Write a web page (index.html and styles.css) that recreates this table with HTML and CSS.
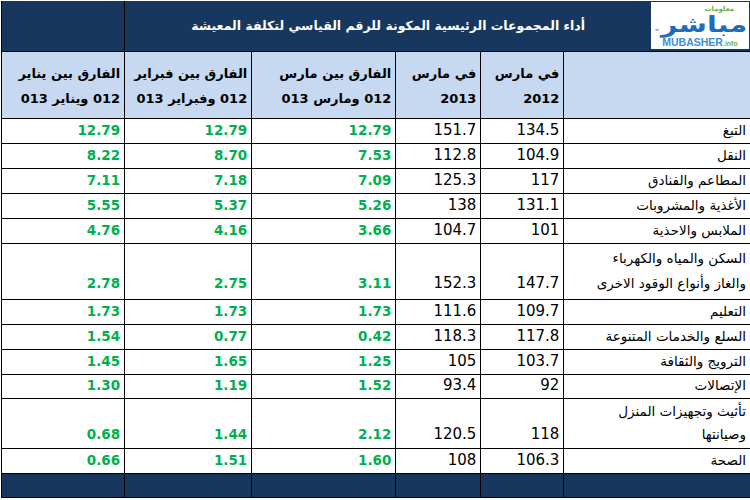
FILE: index.html
```html
<!DOCTYPE html>
<html lang="ar" dir="rtl">
<head>
<meta charset="utf-8">
<title>أداء المجموعات الرئيسية</title>
<link rel="stylesheet" href="styles.css">
</head>
<body>
<table class="sheet">
  <colgroup>
    <col class="c-label"><col class="c-y12"><col class="c-y13"><col class="c-mar"><col class="c-feb"><col class="c-jan">
  </colgroup>
  <thead>
    <tr class="row-title">
      <th colspan="5" class="title-cell">
        <div class="title-wrap">
          <div class="logo">
            <div class="logo-top">معلومات</div>
            <div class="logo-main"><span class="logo-tm">™</span><span class="logo-ar">مباشر</span></div>
            <div class="logo-bottom"><span class="logo-en">MUBASHER</span><span class="logo-info">.info</span></div>
          </div>
          <div class="title">أداء المجموعات الرئيسية المكونة للرقم القياسي لتكلفة المعيشة</div>
        </div>
      </th>
      <th class="title-side"></th>
    </tr>
    <tr class="row-head">
      <th></th>
      <th>في مارس<br>2012</th>
      <th>في مارس<br>2013</th>
      <th>الفارق بين مارس<br>012 ومارس 013</th>
      <th>الفارق بين فبراير<br>012 وفبراير 013</th>
      <th>الفارق بين يناير<br>012 ويناير 013</th>
    </tr>
  </thead>
  <tbody>
    <tr><td class="label">التبغ</td><td>134.5</td><td>151.7</td><td class="g">12.79</td><td class="g">12.79</td><td class="g">12.79</td></tr>
    <tr><td class="label">النقل</td><td>104.9</td><td>112.8</td><td class="g">7.53</td><td class="g">8.70</td><td class="g">8.22</td></tr>
    <tr><td class="label">المطاعم والفنادق</td><td>117</td><td>125.3</td><td class="g">7.09</td><td class="g">7.18</td><td class="g">7.11</td></tr>
    <tr><td class="label">الأغذية والمشروبات</td><td>131.1</td><td>138</td><td class="g">5.26</td><td class="g">5.37</td><td class="g">5.55</td></tr>
    <tr><td class="label">الملابس والاحذية</td><td>101</td><td>104.7</td><td class="g">3.66</td><td class="g">4.16</td><td class="g">4.76</td></tr>
    <tr class="row-tall"><td class="label">السكن والمياه والكهرباء<br>والغاز وأنواع الوقود الاخرى</td><td>147.7</td><td>152.3</td><td class="g">3.11</td><td class="g">2.75</td><td class="g">2.78</td></tr>
    <tr><td class="label">التعليم</td><td>109.7</td><td>111.6</td><td class="g">1.73</td><td class="g">1.73</td><td class="g">1.73</td></tr>
    <tr><td class="label">السلع والخدمات المتنوعة</td><td>117.8</td><td>118.3</td><td class="g">0.42</td><td class="g">0.77</td><td class="g">1.54</td></tr>
    <tr><td class="label">الترويج والثقافة</td><td>103.7</td><td>105</td><td class="g">1.25</td><td class="g">1.65</td><td class="g">1.45</td></tr>
    <tr class="row-24"><td class="label">الإتصالات</td><td>92</td><td>93.4</td><td class="g">1.52</td><td class="g">1.19</td><td class="g">1.30</td></tr>
    <tr class="row-50"><td class="label">تأثيث وتجهيزات المنزل<br>وصيانتها</td><td>118</td><td>120.5</td><td class="g">2.12</td><td class="g">1.44</td><td class="g">0.68</td></tr>
    <tr><td class="label">الصحة</td><td>106.3</td><td>108</td><td class="g">1.60</td><td class="g">1.51</td><td class="g">0.66</td></tr>
  </tbody>
  <tfoot>
    <tr class="row-foot"><td></td><td></td><td></td><td></td><td></td><td></td></tr>
  </tfoot>
</table>
</body>
</html>
```

FILE: styles.css
```css
html, body {
  margin: 0;
  padding: 0;
  background: #ffffff;
}
body {
  width: 750px;
  height: 500px;
  overflow: hidden;
  font-family: "DejaVu Sans", sans-serif;
}
.sheet {
  border-collapse: collapse;
  table-layout: fixed;
  width: 749px;
  margin-top: 1px;
  direction: rtl;
}
.c-label { width: 186px; }
.c-y12 { width: 83px; }
.c-y13 { width: 85px; }
.c-mar { width: 144px; }
.c-feb { width: 127px; }
.c-jan { width: 123px; }

.sheet th, .sheet td {
  box-sizing: border-box;
  border: 1px solid #000;
  padding: 0 4px 3px 4px;
  text-align: right;
  vertical-align: bottom;
  overflow: hidden;
  white-space: nowrap;
}
.sheet tr > :first-child { border-right-style: hidden; }

/* title row */
.row-title th {
  height: 50px;
  background: #17375e;
  border-top-style: hidden;
  padding: 0;
  vertical-align: middle;
}
.title-wrap {
  display: flex;
  align-items: center;
  height: 49px;
}
.logo {
  box-sizing: border-box;
  width: 98px;
  height: 47px;
  margin-right: 1px;
  padding-top: 3px;
  background: #ffffff;
  display: flex;
  flex-direction: column;
  align-items: center;
  direction: ltr;
  overflow: hidden;
}
.logo-top {
  align-self: flex-end;
  margin-right: 15px;
  font-size: 7px;
  font-weight: bold;
  line-height: 8px;
  height: 8px;
  color: #6db33f;
}
.logo-main {
  display: flex;
  align-items: flex-end;
  height: 23px;
  line-height: 23px;
}
.logo-tm {
  font-size: 5px;
  color: #1f5fa8;
  line-height: 10px;
  margin-right: 4px;
}
.logo-ar {
  display: inline-block;
  font-size: 22px;
  font-weight: bold;
  color: #1f6cb8;
  transform: scaleX(1.3);
  transform-origin: center;
  margin: 0 8px;
}
.logo-bottom {
  display: flex;
  align-items: baseline;
  height: 11px;
  line-height: 11px;
  margin-top: 1px;
}
.logo-en {
  font-family: "Liberation Sans", Arial, sans-serif;
  font-size: 10.5px;
  color: #3b8fd6;
}
.logo-info {
  font-family: "Liberation Sans", Arial, sans-serif;
  font-size: 7px;
  font-weight: bold;
  color: #6db33f;
}
.title {
  flex: 1;
  text-align: center;
  color: #ffffff;
  font-size: 12.5px;
  font-weight: bold;
}

/* header row */
.row-head th {
  height: 67px;
  background: #c6d9f1;
  font-size: 13px;
  font-weight: bold;
  line-height: 25px;
  color: #000;
  padding-bottom: 7px;
}

/* body */
.sheet tbody td {
  height: 25px;
  font-size: 15px;
  line-height: 20px;
  color: #000;
}
.sheet tbody td.label {
  font-size: 13.5px;
}
.sheet tbody td.g {
  color: #00b050;
  font-weight: bold;
  font-size: 13.5px;
}
.sheet tbody tr.row-tall td { height: 56px; line-height: 25px; }
.sheet tbody tr.row-24 td { height: 24px; }
.sheet tbody tr.row-50 td { height: 50px; line-height: 23px; padding-bottom: 2px; }

.row-foot td {
  height: 24px;
  background: #17375e;
  padding: 0;
}
```
